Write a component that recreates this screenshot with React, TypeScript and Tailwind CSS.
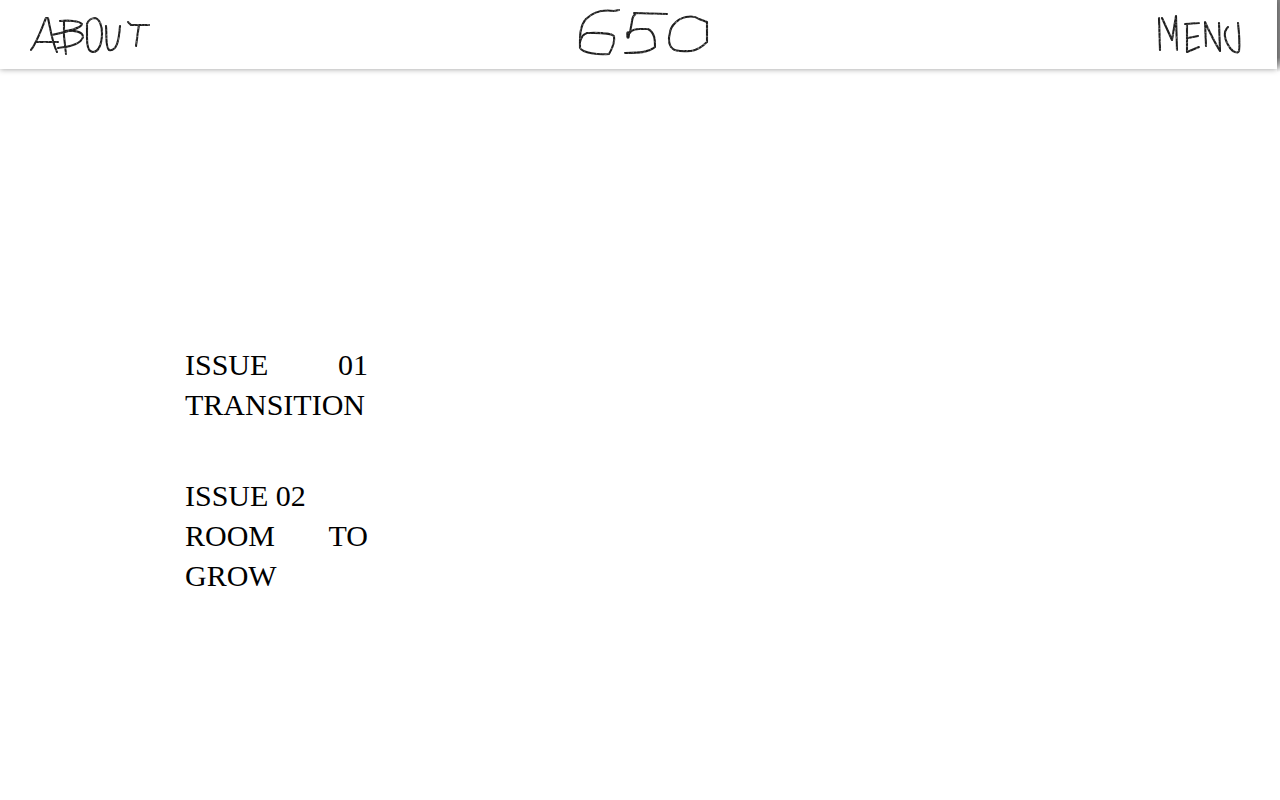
const issues = [
  { number: '01', title: 'TRANSITION', breakTitle: false },
  { number: '02', title: 'ROOM TO GROW', breakTitle: true },
]

const pencil = {
  fill: 'none',
  stroke: '#1c1c1c',
  strokeWidth: 2.1,
  strokeLinecap: 'round' as const,
  strokeLinejoin: 'round' as const,
}

// Roughens the strokes so they look pencilled
function PencilFilter() {
  return (
    <svg className="absolute h-0 w-0" aria-hidden="true">
      <filter id="pencil" x="-5%" y="-5%" width="110%" height="110%" colorInterpolationFilters="sRGB">
        <feTurbulence type="fractalNoise" baseFrequency="0.5" numOctaves="2" seed="4" result="noise" />
        <feDisplacementMap in="SourceGraphic" in2="noise" scale="1.4" xChannelSelector="R" yChannelSelector="G" result="rough" />
        <feColorMatrix in="noise" type="matrix" values="0 0 0 0 0  0 0 0 0 0  0 0 0 0 0  0 0 -1.2 0 1.55" result="grain" />
        <feComposite in="rough" in2="grain" operator="in" />
      </filter>
    </svg>
  )
}

function AboutMark() {
  return (
    <svg width="124" height="69" viewBox="28 0 124 69" aria-hidden="true">
      <g {...pencil} filter="url(#pencil)">
        <path d="M31 50 C37 42 41 30 46 18 L48 18 C50 27 52 42 57 52" />
        <path d="M37 42 L58 42" />
        <path d="M64 21 L64 36 L66 54" />
        <path d="M60 21 C69 20 79 21 82 24 C82 28 69 31 52 35" />
        <path d="M64 31 C72 30 83 31 83 37 C81 44 68 47 58 48" />
        <path d="M87 24 C88 20 92 18 95 18 C100 19 102 27 102 33 C102 43 99 52 93 52 C88 52 87 46 87 38 L87 25" />
        <path d="M106 26 C107 35 105 46 109 50 C117 52 119 39 120 26" />
        <path d="M128 22 L131 25 L149 25" />
        <path d="M139 25 C138 31 137 39 136 46" />
      </g>
    </svg>
  )
}

function LogoMark() {
  return (
    <svg width="143" height="69" viewBox="567 0 143 69" aria-hidden="true">
      <g {...pencil} filter="url(#pencil)">
        <path d="M619 10 L614 11 C601 9 592 13 586 19 C579 27 580 39 580 48 C583 53 598 55 609 54 C612 49 615 42 614 36 C609 32 594 33 587 33 C583 34 581 38 580 42" />
        <path d="M667 14 L634 13 M636 13 L633 17 C631 22 632 28 629 34" />
        <path d="M628 37 C629 31 633 29 639 29 L648 29 C655 33 655 40 655 47 C649 52 641 53 625 53" />
        <path d="M628 33 L628 37" strokeWidth="3.4" />
        <path d="M699 19 C695 16 691 16 686 17 C677 19 671 26 670 32 C668 40 669 46 673 49 C676 52 684 51 691 51 C698 50 703 46 707 42 L707 22 Z" />
      </g>
    </svg>
  )
}

function MenuMark() {
  return (
    <svg width="94" height="69" viewBox="1155 0 94 69" aria-hidden="true">
      <g {...pencil} filter="url(#pencil)">
        <path d="M1160 50 L1159 18 M1162 18 L1172 40 L1176 16 L1177 50" />
        <path d="M1187 24 L1187 52 M1185 24 L1199 23 M1188 38 L1198 36 M1187 52 L1199 47" />
        <path d="M1206 46 L1205 22 C1210 33 1215 43 1220 51 L1219 23" />
        <path d="M1228 27 C1222 33 1226 42 1230 48 C1233 52 1238 54 1239 51 C1240 43 1239 32 1238 23" />
      </g>
    </svg>
  )
}

export default function App() {
  return (
    <div className="min-h-screen bg-white text-black">
      <PencilFilter />
      <div className="flex overflow-hidden pb-2">
        <header className="z-10 grid h-[69px] grow grid-cols-[1fr_auto_1fr] items-center bg-white px-7 shadow-[0_0_6px_rgba(0,0,0,0.4)]">
          <a href="#about" aria-label="About" className="justify-self-start">
            <AboutMark />
          </a>
          <a href="#home" aria-label="650">
            <LogoMark />
          </a>
          <button type="button" aria-label="Menu" className="cursor-pointer justify-self-end">
            <MenuMark />
          </button>
        </header>
        {/* Shadow at the edge of the closed drawer */}
        <div className="h-[72px] w-[3px] bg-linear-to-b from-[#888] from-80% to-white" />
      </div>

      <main className="mt-[265px] ml-[185px] flex w-[183px] flex-col gap-[51px] font-['Liberation_Serif',serif] text-[30px] leading-[40px]">
        {issues.map((issue) => (
          <a key={issue.number} href={`#issue-${issue.number}`} className="block text-justify">
            ISSUE {issue.number} {issue.breakTitle && <br />}
            {issue.title}
          </a>
        ))}
      </main>
    </div>
  )
}
